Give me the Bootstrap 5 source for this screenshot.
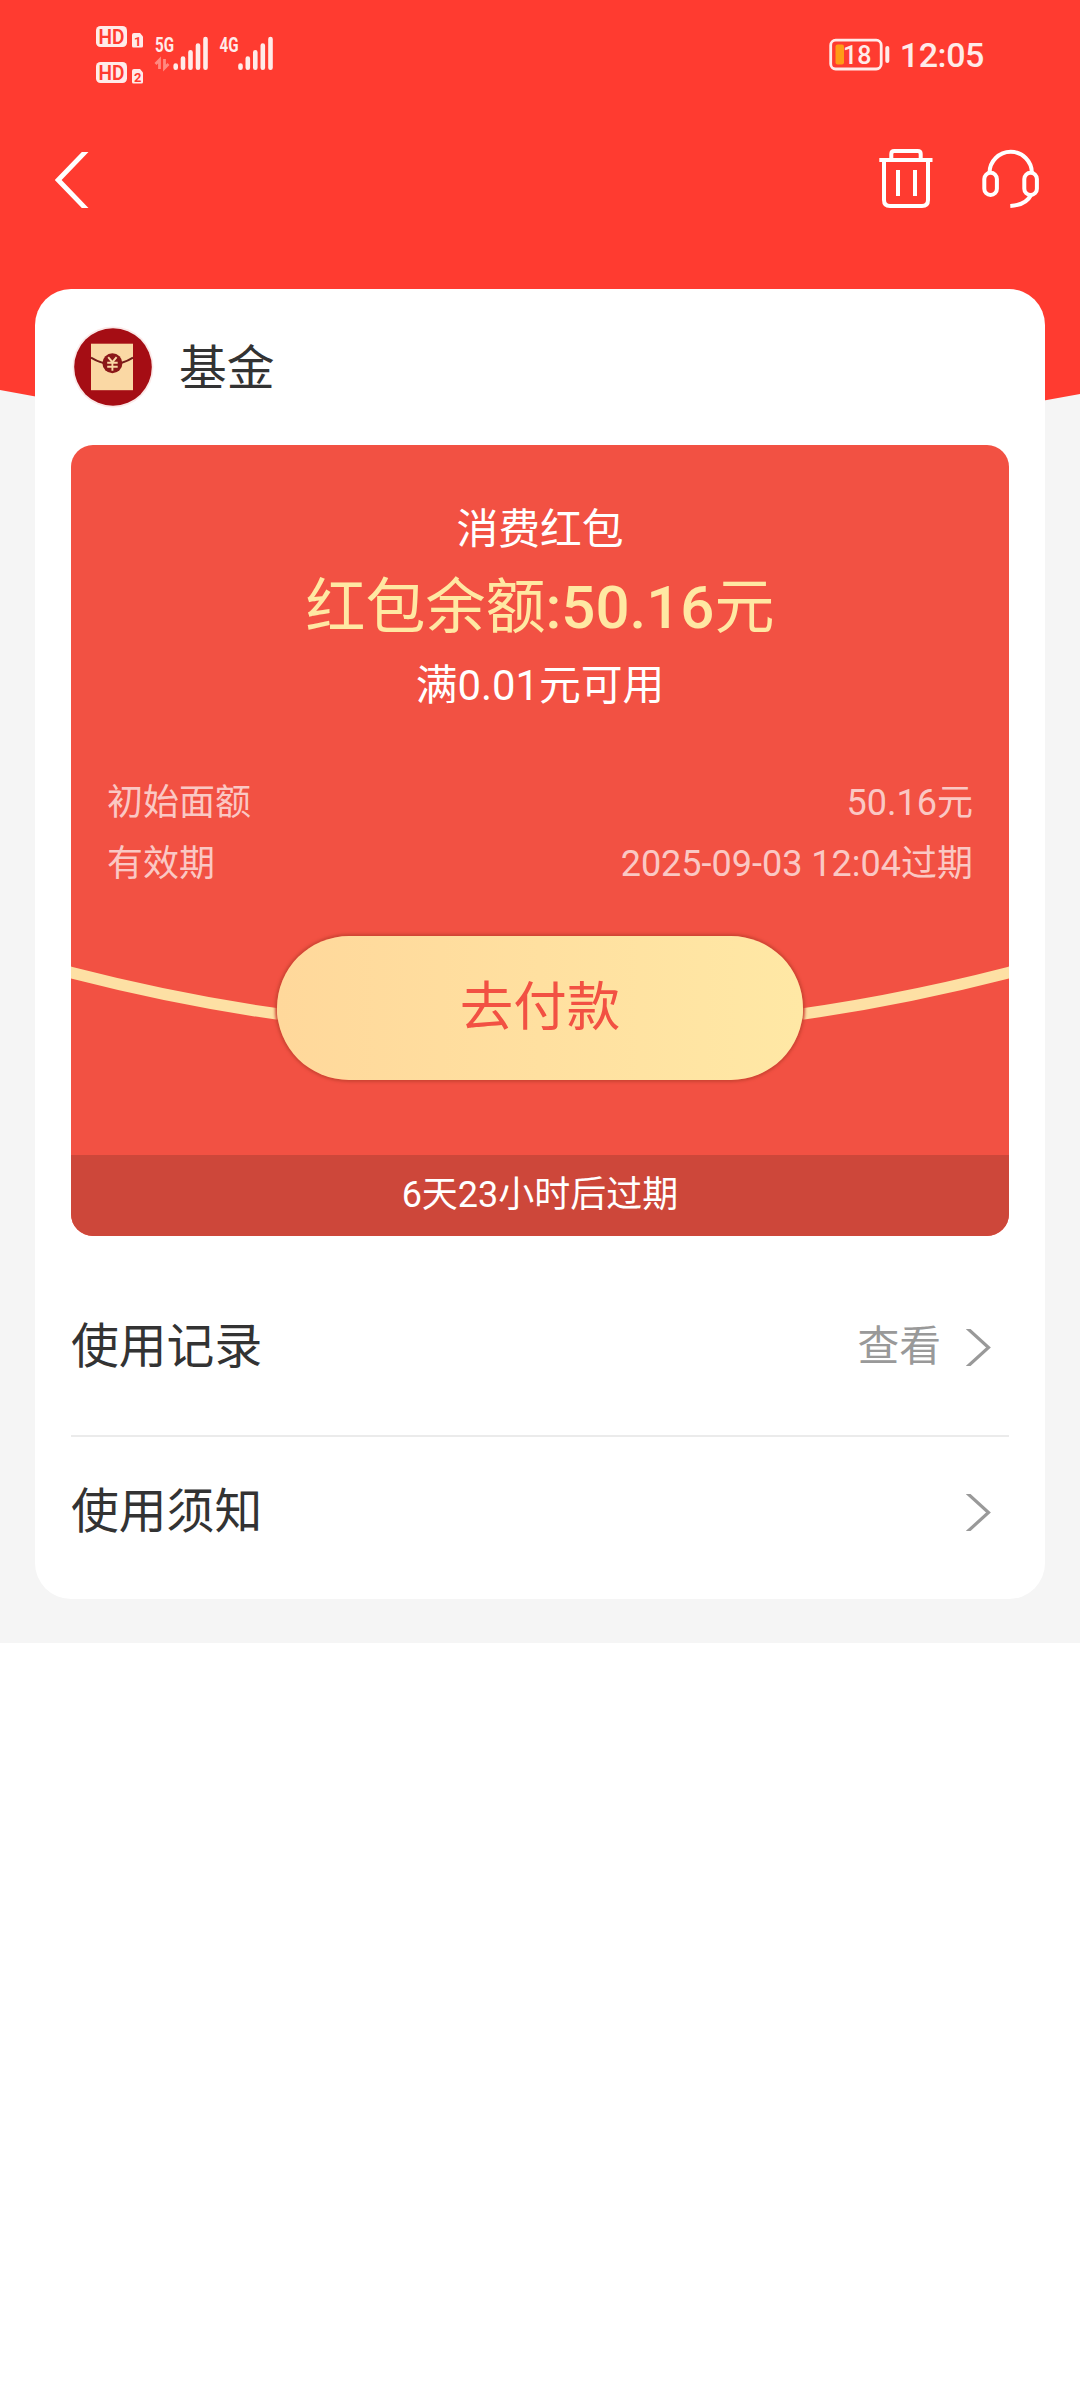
<!DOCTYPE html>
<html lang="zh-CN">
<head>
<meta charset="utf-8">
<meta name="viewport" content="width=device-width, initial-scale=1">
<title>红包详情</title>
<link href="https://cdn.jsdelivr.net/npm/bootstrap@5.3.0/dist/css/bootstrap.min.css" rel="stylesheet">
<style>
  body { font-family: Roboto, "Noto Sans CJK SC", sans-serif; color: #333; background: #fff; }
  svg { display: block; flex: none; }
  .screen { width: 1080px; height: 1643px; background: #f5f5f5; }
  .backdrop { top: 0; left: 0; z-index: 0; }
  .layer { z-index: 1; }
  .status-strip { height: 110px; padding: 0 96px 0 92px; }
  .tool-strip { height: 179px; padding: 38px 40px 0 55px; }
  .tool-icons { gap: 49px; }
  .clock { font-size: 34px; font-weight: 500; line-height: 40px; color: #ffebe9; letter-spacing: -.4px; }
  .sheet { margin: 0 35px; height: 1310px; padding: 0 36px; border-radius: 36px; }
  .sheet-head { height: 156px; gap: 24px; }
  .t48 { font-size: 47.8px; line-height: 60px; }
  .t42 { font-size: 41.8px; line-height: 60px; }
  .t36 { font-size: 36px; line-height: 60px; }
  .coupon { height: 791px; border-radius: 22px; background: #f25143; }
  .coupon-title { padding-top: 55px; }
  .amount { font-size: 60px; line-height: 96px; color: #ffe8a3; }
  .amount b { font-weight: 500; }
  .facts { padding: 57px 36px 0; color: rgba(255,255,255,.7); }
  .facts-row { height: 60.5px; }
  .ribbon { top: 0; left: 0; }
  .pay { width: 526px; height: 144px; margin-top: 42px; border: 0; border-radius: 72px; font-size: 53.5px; color: #f25143;
         background: linear-gradient(90deg, #ffd89b, #ffe8a5); box-shadow: 0 0 3px 2px #cc4433; }
  .expiry { height: 81px; padding-bottom: 2px; background: #cd473a; }
  .entry-a { height: 199px; padding: 23px 18px 0 0; }
  .entry-b { height: 163px; padding: 0 18px 11px 0; border-top: 2px solid #ebebeb; }
  .muted { color: #999; margin-right: 25px; }
</style>
</head>
<body>
<main class="screen position-relative">
  <svg class="backdrop position-absolute" width="1080" height="460" viewBox="0 0 1080 460"><path d="M0 0H1080V394Q540 495 0 390Z" fill="#ff3b30"/></svg>

  <div class="layer position-relative">
    <div class="status-strip d-flex justify-content-between">
      <svg width="200" height="100" viewBox="92 0 200 100" fill="#ffebe9" font-family="Roboto, sans-serif">
        <g>
          <rect x="96" y="26" width="31" height="21" rx="4.500"/>
          <text x="98.500" y="43.600" font-size="20" font-weight="600" fill="#ff3b30" textLength="26" lengthAdjust="spacingAndGlyphs">HD</text>
          <path d="M134 33H140L143 36.500V46Q143 47.500 141.500 47.500H133.500Q132 47.500 132 46V35Q132 33 134 33Z"/>
        </g>
        <text x="134" y="46" font-size="13" font-weight="700" fill="#ff3b30">1</text>
        <g>
          <rect x="96" y="62" width="31" height="21" rx="4.500"/>
          <text x="98.500" y="79.600" font-size="20" font-weight="600" fill="#ff3b30" textLength="26" lengthAdjust="spacingAndGlyphs">HD</text>
          <path d="M134 69H140L143 72.500V82Q143 83.500 141.500 83.500H133.500Q132 83.500 132 82V71Q132 69 134 69Z"/>
        </g>
        <text x="134" y="82" font-size="13" font-weight="700" fill="#ff3b30">2</text>
        <text x="155" y="51.500" font-size="20" font-weight="700" textLength="19" lengthAdjust="spacingAndGlyphs">5G</text>
        <text x="219.500" y="51.500" font-size="20" font-weight="700" textLength="19" lengthAdjust="spacingAndGlyphs">4G</text>
        <path d="M155.500 64L159.500 60V69M164.500 59V68L168.500 64" fill="none" stroke="#ff8a80" stroke-width="2.800"/>
        <g stroke="#ffebe9" stroke-width="4.600" stroke-linecap="round">
          <path d="M175.700 65.500V67.800M183 58.500V67.800M190.500 52.300V67.800M198 45.600V67.800M205.500 39V67.800"/>
          <path d="M240.500 65.500V67.800M247.800 58.500V67.800M255.300 52.300V67.800M262.800 45.600V67.800M270.500 39V67.800"/>
        </g>
      </svg>
      <div class="d-flex align-items-center gap-2">
        <svg width="64" height="40" viewBox="827.500 35 64 40">
          <rect x="830.200" y="40.200" width="50.500" height="28.800" rx="5" fill="none" stroke="#ffebe9" stroke-width="2.800"/>
          <rect x="884.800" y="46" width="4" height="17" rx="2" fill="#ffebe9"/>
          <rect x="835" y="44.500" width="8.500" height="20" rx="2" fill="#ff9c17"/>
          <text x="842.500" y="64" font-family="Roboto, sans-serif" font-size="25" font-weight="500" fill="#ffebe9">18</text>
        </svg>
        <span class="clock">12:05</span>
      </div>
    </div>

    <header class="tool-strip d-flex justify-content-between align-items-start">
      <svg class="mt-1" width="34" height="56" viewBox="0 0 34 56" fill="none" stroke="#fff" stroke-width="4.800"><path d="M34 -4L3.200 28L34 60"/></svg>
      <div class="tool-icons d-flex">
        <svg width="54" height="62" viewBox="879 148 54 62" fill="none" stroke="#fff" stroke-width="4">
          <path d="M879.300 160H932.500M891.300 160V154Q891.300 151 894.300 151H917.700Q920.700 151 920.700 154V160M884 160V200Q884 206 890 206H922Q928 206 928 200V160M898 170V196M915 170V196"/>
        </svg>
        <svg width="58" height="62" viewBox="982 148 58 62" fill="none" stroke="#fff" stroke-width="4">
          <rect x="984.300" y="172.700" width="12.600" height="22.300" rx="6.300"/>
          <rect x="1024.300" y="172.700" width="12.600" height="22.300" rx="6.300"/>
          <path d="M989.500 173A21.200 21.200 0 0 1 1031.900 173M1031 195Q1026 205 1010.300 206"/>
        </svg>
      </div>
    </header>

    <section class="sheet bg-white">
      <div class="sheet-head d-flex align-items-center">
        <svg width="84" height="84" viewBox="71.300 325.300 84 84">
          <circle cx="113.300" cy="367.300" r="40.500" fill="#fbe9e8"/>
          <circle cx="113.300" cy="367.300" r="38.800" fill="#a50d14"/>
          <rect x="91.300" y="344" width="42" height="46.500" fill="#fad8a4"/>
          <path d="M91.300 358Q112.500 371 133.300 358" fill="none" stroke="#741d1a" stroke-width="2"/>
          <circle cx="112.700" cy="363.500" r="10" fill="#8b1718"/>
          <path d="M108.500 357.500L112.700 362.500L116.900 357.500M112.700 362.500V371M107.500 363H118M107.500 367H118" fill="none" stroke="#fad8a4" stroke-width="1.900"/>
        </svg>
        <span class="t48 pt-1">基金</span>
      </div>

      <div class="coupon position-relative overflow-hidden d-flex flex-column">
        <svg class="ribbon position-absolute" width="938" height="791" viewBox="0 0 938 791"><path d="M-20 522L0 527.500Q469 648.500 938 527.500L958 522" fill="none" stroke="#fde0a4" stroke-width="11.500"/></svg>
        <div class="text-center text-white coupon-title t42">消费红包</div>
        <div class="text-center amount">红包余额<b>:50.16</b>元</div>
        <div class="text-center text-white t42">满0.01元可用</div>
        <div class="facts t36">
          <div class="facts-row d-flex justify-content-between"><span>初始面额</span><span>50.16元</span></div>
          <div class="facts-row d-flex justify-content-between"><span>有效期</span><span>2025-09-03 12:04过期</span></div>
        </div>
        <button class="pay position-relative align-self-center p-0" type="button">去付款</button>
        <div class="expiry mt-auto d-flex align-items-center justify-content-center text-white t36">6天23小时后过期</div>
      </div>

      <div class="entry-a d-flex align-items-center">
        <span class="t48 me-auto">使用记录</span>
        <span class="t42 muted">查看</span>
        <svg width="25" height="37" viewBox="0 0 25 37" fill="none" stroke="#999" stroke-width="3.200"><path d="M0.500 -1.500L22.500 18.500L0.500 38.500"/></svg>
      </div>
      <div class="entry-b d-flex align-items-center">
        <span class="t48 me-auto">使用须知</span>
        <svg width="25" height="37" viewBox="0 0 25 37" fill="none" stroke="#999" stroke-width="3.200"><path d="M0.500 -1.500L22.500 18.500L0.500 38.500"/></svg>
      </div>
    </section>
  </div>
</main>
<script src="https://cdn.jsdelivr.net/npm/bootstrap@5.3.0/dist/js/bootstrap.bundle.min.js"></script>
</body>
</html>
